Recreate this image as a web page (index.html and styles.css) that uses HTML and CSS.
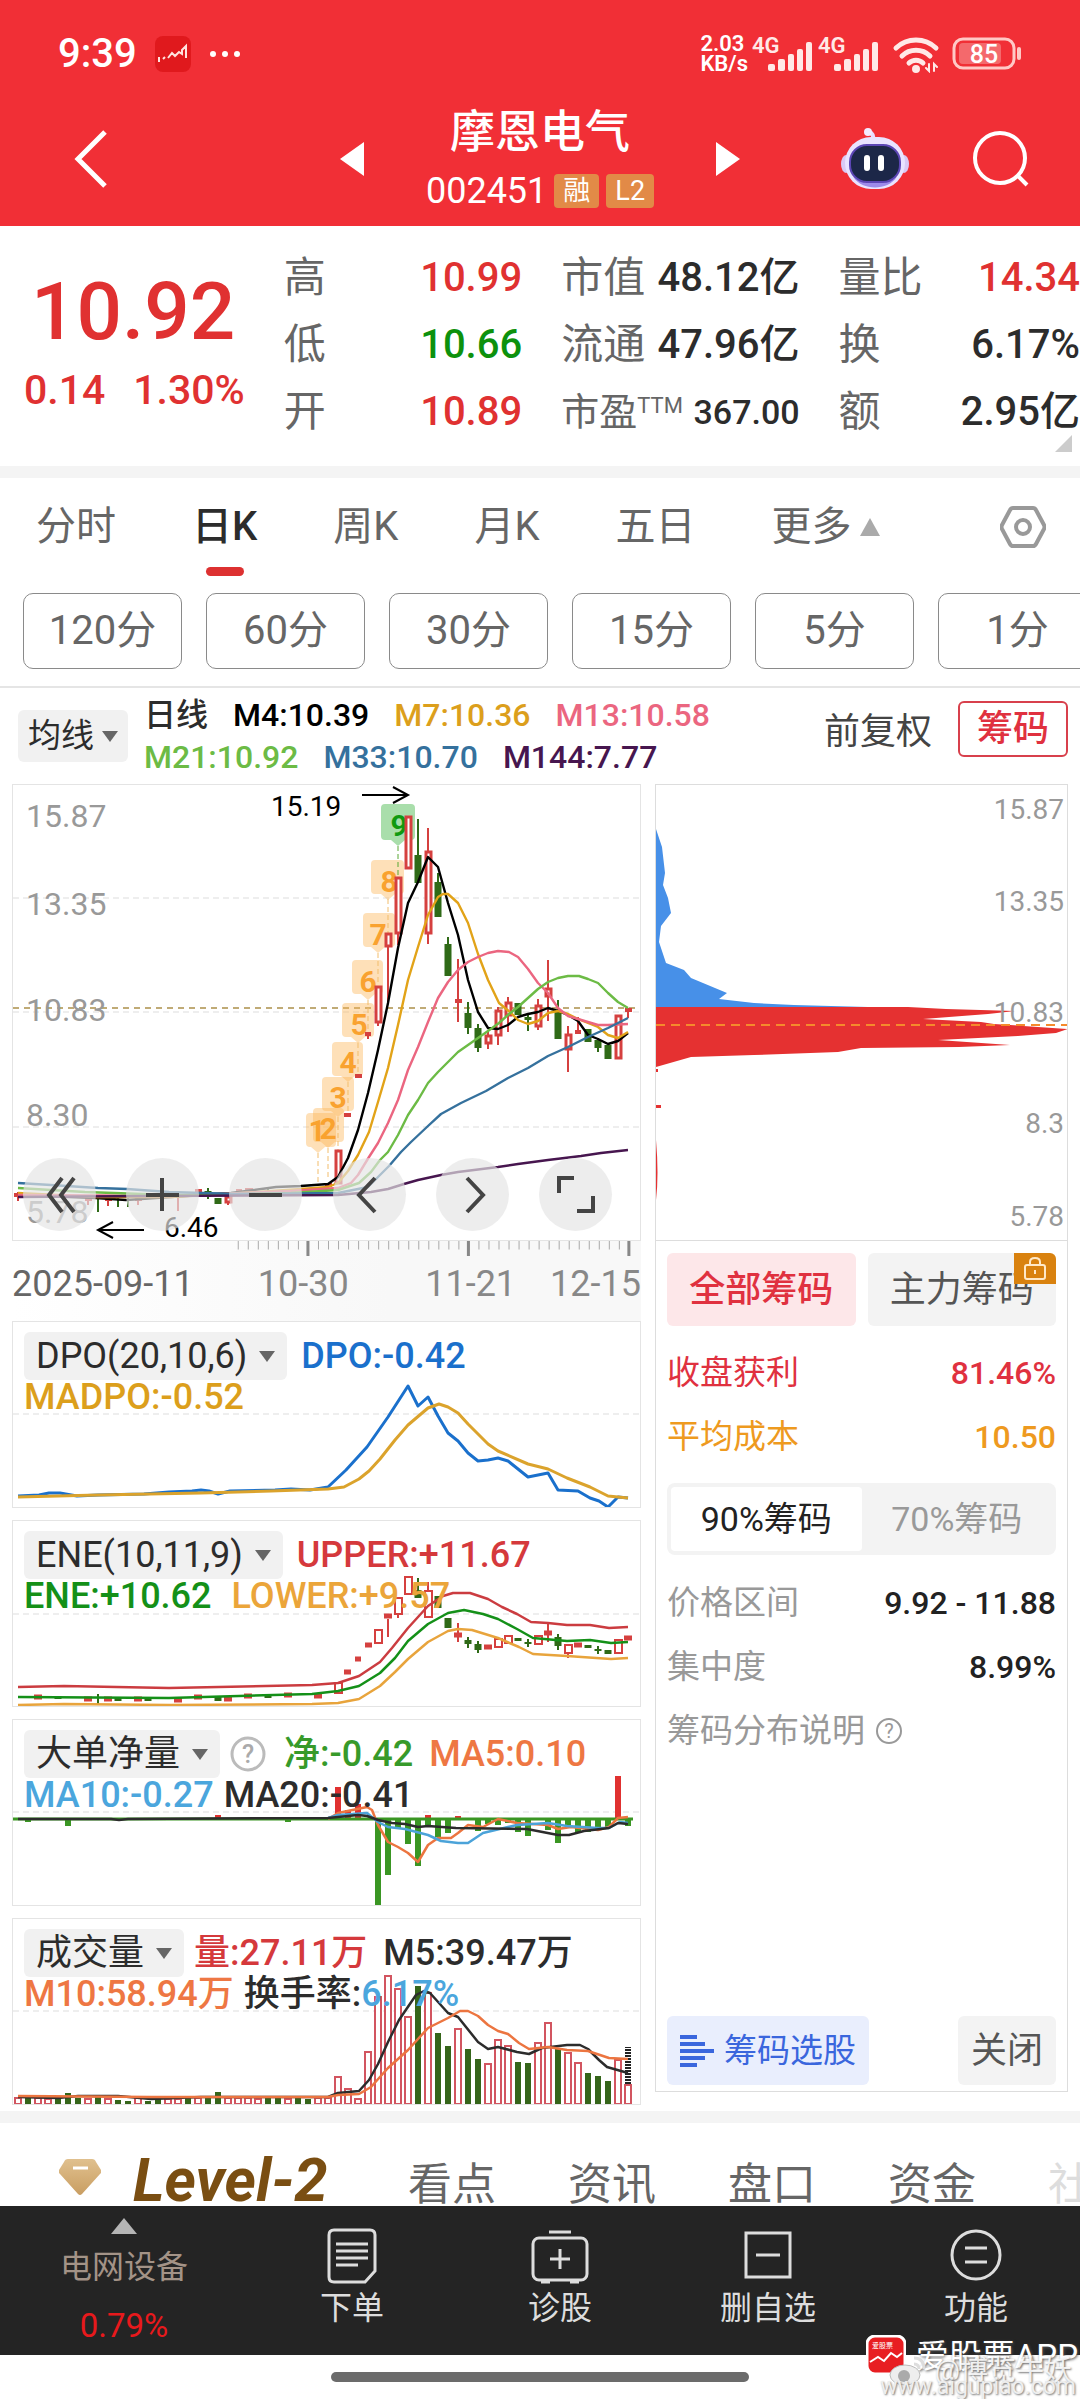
FILE: index.html
```html
<!DOCTYPE html>
<html lang="zh-CN">
<head>
<meta charset="utf-8">
<meta name="viewport" content="width=device-width">
<title>摩恩电气 002451</title>
<link rel="stylesheet" href="styles.css">
</head>
<body>
<header class="top">
  <div class="status">
    <span class="clock">9:39</span>
    <svg class="app-dot" width="36" height="36" viewBox="0 0 36 36"><rect width="36" height="36" rx="8" fill="#e0191d"/><path d="M4 26V21M8 23l2-2M13 22l4-5 3 3 4-4 3 2V14l4-4v12" fill="none" stroke="#ffe3df" stroke-width="2"/></svg>
    <svg width="34" height="8" viewBox="0 0 34 8" fill="#fff"><circle cx="4" cy="4" r="3"/><circle cx="16" cy="4" r="3"/><circle cx="28" cy="4" r="3"/></svg>
    <div class="status-right">
      <span class="speed">2.03<br>KB/s</span>
      <svg width="62" height="38" viewBox="0 0 62 38"><text x="0" y="18" class="g4">4G</text><g fill="#ffe9e7"><rect x="16" y="29" width="7" height="7" rx="2"/><rect x="26" y="24" width="7" height="12" rx="2"/><rect x="36" y="19" width="6" height="17" rx="2"/><rect x="45" y="14" width="6" height="22" rx="2"/><rect x="54" y="7" width="6" height="29" rx="2"/></g></svg>
      <svg width="62" height="38" viewBox="0 0 62 38"><text x="0" y="18" class="g4">4G</text><g fill="#ffe9e7"><rect x="16" y="29" width="7" height="7" rx="2"/><rect x="26" y="24" width="7" height="12" rx="2"/><rect x="36" y="19" width="6" height="17" rx="2"/><rect x="45" y="14" width="6" height="22" rx="2"/><rect x="54" y="7" width="6" height="29" rx="2"/></g></svg>
      <svg class="wifi" width="48" height="38" viewBox="0 0 48 38" fill="none" stroke="#ffe9e7" stroke-width="5" stroke-linecap="round"><path d="M4 13a29 29 0 0 1 40 0M10 21a20 20 0 0 1 28 0M17 28a10 10 0 0 1 14 0"/><circle cx="24" cy="34" r="2" stroke-width="4"/><path d="M37 29v7l-3-3M42 36v-7l3 3" stroke-width="2"/></svg>
      <svg width="70" height="34" viewBox="0 0 70 34"><rect x="2" y="2" width="60" height="29" rx="9" fill="none" stroke="#ffc9c6" stroke-width="3"/><rect x="7" y="6" width="42" height="21" rx="4" fill="#f4696c"/><path d="M67 12v9" stroke="#ffc9c6" stroke-width="4" stroke-linecap="round"/><text x="32" y="26" text-anchor="middle" class="batt">85</text></svg>
    </div>
  </div>
  <div class="titlebar">
    <button class="plain back" aria-label="返回"><svg width="34" height="60" viewBox="0 0 34 60"><path d="M31 3 4 30l27 27" fill="none" stroke="#fff" stroke-width="5"/></svg></button>
    <div class="name">
      <button class="plain" aria-label="上一只"><svg width="24" height="34" viewBox="0 0 24 34"><path d="M24 0v34L0 17z" fill="#fff"/></svg></button>
      <div class="name-text">
        <h1>摩恩电气</h1>
        <div class="code">002451 <span class="badge">融</span><span class="badge">L2</span></div>
      </div>
      <button class="plain" aria-label="下一只"><svg width="24" height="34" viewBox="0 0 24 34"><path d="M0 0v34l24-17z" fill="#fff"/></svg></button>
    </div>
    <div class="tools">
      <button class="plain" aria-label="智能助手"><svg width="68" height="64" viewBox="0 0 68 64"><path d="M32 14c1-5-1-8-4-9" fill="none" stroke="#e9dcff" stroke-width="4"/><circle cx="27" cy="5" r="4" fill="#f4eaff"/><ellipse cx="5" cy="37" rx="5" ry="9" fill="#d9c9f5"/><ellipse cx="63" cy="37" rx="5" ry="9" fill="#d9c9f5"/><rect x="4" y="10" width="60" height="52" rx="26" fill="#e9e3ff"/><path d="M12 50c10 14 34 14 44 0-8 8-36 8-44 0z" fill="#9d8bea"/><rect x="9" y="18" width="50" height="37" rx="17" fill="#1c2748" stroke="#5c46b5" stroke-width="2"/><path d="M26 31v10M40 31v10" stroke="#fff" stroke-width="6" stroke-linecap="round"/></svg></button>
      <button class="plain" aria-label="搜索"><svg width="58" height="58" viewBox="0 0 58 58" fill="none" stroke="#fff" stroke-width="4"><circle cx="28" cy="28" r="25"/><path d="m45 45 10 10"/></svg></button>
    </div>
  </div>
</header>

<section class="quote">
  <div class="price"><strong>10.92</strong><div class="delta"><span>0.14</span><span>1.30%</span></div></div>
  <dl>
    <div><dt>高</dt><dd class="red">10.99</dd></div>
    <div><dt>低</dt><dd class="green">10.66</dd></div>
    <div><dt>开</dt><dd class="red">10.89</dd></div>
  </dl>
  <dl>
    <div><dt>市值</dt><dd>48.12亿</dd></div>
    <div><dt>流通</dt><dd>47.96亿</dd></div>
    <div class="pe"><dt>市盈<sup>TTM</sup></dt><dd>367.00</dd></div>
  </dl>
  <dl>
    <div><dt>量比</dt><dd class="red">14.34</dd></div>
    <div><dt>换</dt><dd>6.17%</dd></div>
    <div><dt>额</dt><dd>2.95亿</dd></div>
  </dl>
  <svg class="corner" width="17" height="17" viewBox="0 0 17 17"><path d="M17 0v17H0z" fill="#ccc"/></svg>
</section>

<nav class="periods">
  <button class="plain">分时</button>
  <button class="plain on">日K</button>
  <button class="plain">周K</button>
  <button class="plain">月K</button>
  <button class="plain">五日</button>
  <button class="plain more">更多<svg width="20" height="18" viewBox="0 0 20 18"><path d="M10 0l10 18H0z" fill="#aaa"/></svg></button>
  <button class="plain gear" aria-label="设置"><svg width="46" height="42" viewBox="0 0 46 42" fill="none" stroke="#999" stroke-width="4"><path d="M13 2h20q2 0 3 2l8 15q1 2 0 4l-8 15q-1 2-3 2H13q-2 0-3-2L2 23q-1-2 0-4L10 4q1-2 3-2z"/><circle cx="23" cy="21" r="7"/></svg></button>
</nav>
<div class="minutes">
  <button>120分</button><button>60分</button><button>30分</button><button>15分</button><button>5分</button><button>1分</button>
</div>

<section class="ma">
  <button class="pick">均线<i class="caret"></i></button>
  <div class="ma-values">
    <div><span class="c-ink">日线</span><span>M4:10.39</span><span class="c-gold">M7:10.36</span><span class="c-pink">M13:10.58</span></div>
    <div><span class="c-lime">M21:10.92</span><span class="c-steel">M33:10.70</span><span class="c-plum">M144:7.77</span></div>
  </div>
  <button class="plain adjust">前复权</button>
  <button class="chip-btn">筹码</button>
</section>

<main class="board">
  <div class="charts">
    <div class="panel main">
      <svg viewBox="12 0 627 455">
        <g fill="none" stroke="#ddd" stroke-dasharray="6 4"><path d="M12 113H639M12 227H639M12 342H639"/></g>
        <path d="M12 223H639" stroke="#c0ab76" stroke-width="2" stroke-dasharray="6 5"/>
        <g class="axis"><text x="25" y="42">15.87</text><text x="25" y="130">13.35</text><text x="25" y="236">10.83</text><text x="25" y="341">8.30</text><text x="25" y="438">5.78</text></g>
        <g class="mark"><text x="270" y="31">15.19</text><text x="163" y="452">6.46</text></g>
        <path d="M361 10h45M392 2l15 8-15 8M143 445H98M112 437l-15 8 15 8" fill="none" stroke="#000" stroke-width="2"/>
        <g fill="#fcb556" fill-opacity=".42">
          <path d="M309 328h22q4 0 4 4v26q0 4-4 4h-7l-7 6-7-6h-1q-4 0-4-4v-26q0-4 4-4z"/>
          <path d="M316 323h23q4 0 4 4v26q0 4-4 4h-5l-7 6-7-6h-4q-4 0-4-4v-26q0-4 4-4z"/>
          <path d="M325 292h24q4 0 4 4v26q0 4-4 4h-5l-7 6-7-6h-5q-4 0-4-4v-26q0-4 4-4z"/>
          <path d="M335 257h23q4 0 4 4v26q0 4-4 4h-4l-7 6-7-6h-5q-4 0-4-4v-26q0-4 4-4z"/>
          <path d="M345 218h24q4 0 4 4v26q0 4-4 4h-5l-7 6-7-6h-5q-4 0-4-4v-26q0-4 4-4z"/>
          <path d="M355 175h23q4 0 4 4v26q0 4-4 4h-4l-7 6-7-6h-5q-4 0-4-4v-26q0-4 4-4z"/>
          <path d="M366 128h24q4 0 4 4v26q0 4-4 4h-6l-7 6-7-6h-4q-4 0-4-4v-26q0-4 4-4z"/>
          <path d="M374 75h25q4 0 4 4v26q0 4-4 4h-5l-7 6-7-6h-6q-4 0-4-4V79q0-4 4-4z"/>
        </g>
        <path d="M384 19h26q4 0 4 4v28q0 4-4 4h-6l-7 6-7-6h-6q-4 0-4-4V23q0-4 4-4z" fill="#4cb950" fill-opacity=".48"/>
        <path d="M317 368v30M327 363v32M337 332v33M347 297v31M357 258v30M367 215v32M377 168v32M387 114v34" stroke="#f2bd6d" stroke-dasharray="5 3"/>
        <path d="M397 61v31" stroke="#59a833" stroke-dasharray="5 3"/>
        <g class="nine"><text x="316" y="356">1</text><text x="327" y="354">2</text><text x="337" y="323">3</text><text x="347" y="288">4</text><text x="358" y="250">5</text><text x="367" y="207">6</text><text x="377" y="160">7</text><text x="388" y="107">8</text><text x="398" y="51" class="nine-last">9</text></g>
        <g stroke="#d5403f" fill="#fff">
          <path stroke-width="2" fill="none" d="M17 407v9M87 413v7M97 411v6M107 412v9M137 412v8M177 412v14M197 404v7M227 410v10M387 161v57M397 148v12M377 238v3M427 43v23M427 148v11M457 174v63M487 246v18M497 222v38M507 212v35M537 214v31M547 175v61M567 241v46M577 232v17M627 224v9M367 247v7"/>
          <path stroke-width="3" d="M335 366h5v32h-5zM375 202h5v35h-5zM385 149h5v12h-5zM395 93h5v55h-5zM405 32h5v51h-5zM425 67h5v81h-5zM485 251h5v7h-5zM495 226h5v24h-5zM505 218h5v12h-5zM535 221h5v20h-5zM545 204h5v7h-5zM565 250h5v14h-5zM615 231h5v42h-5zM225 412h5v5h-5z"/>
          <path stroke-width="4" d="M343 330h7M354 291h7M364 249h6M454 216h7M574 247h6M624 225h7M13 410h7M84 414h7M104 414h7M134 414h7M194 406h7M235 406h6M244 405h8M324 400h7"/>
        </g>
        <g stroke="#2f6a17">
          <path stroke-width="2" d="M97 412v15M117 412v10M127 412v10M207 403v11M417 34v36M437 88v10M447 152v8M467 217v32M477 239v28M527 228v18M557 215v12M597 253v14M267 402v6"/>
          <path stroke-width="7" d="M417 70v28M437 97v35M447 159v32M467 228v15M477 243v20M517 218v12M527 232v3M557 226v28M587 244v13M597 255v8M607 260v14M217 413v6M207 406v4"/>
        </g>
        <g fill="none" stroke-width="2.4" stroke-linejoin="round">
          <path stroke="#000" d="M17 410 95 413 125 415 170 412 230 408 275 402 300 401 327 399 337 392 347 373 357 345 367 308 377 265 387 218 397 163 407 118 417 97 427 72 437 82 447 118 457 150 467 195 477 227 487 243 497 244 507 240 517 232 527 229 537 227 547 223 557 226 567 230 577 236 587 250 597 254 607 259 617 256 627 248"/>
          <path stroke="#e2a318" d="M17 408 95 412 170 412 240 408 300 404 327 402 337 398 347 386 357 370 368 347 377 317 387 283 397 240 407 195 417 162 427 130 437 112 442 109 447 109 457 118 467 138 477 169 487 195 498 218 510 228 517 235 527 239 537 236 547 228 557 226 567 229 577 234 587 238 597 242 607 250 617 253 627 247"/>
          <path stroke="#eb6680" d="M17 410 170 411 290 406 337 403 350 398 357 390 368 372 377 358 387 338 397 315 407 285 417 262 427 237 437 213 447 197 457 185 467 177 477 172 487 168 497 166 508 167 517 172 527 184 537 198 547 208 557 223 567 231 577 234 587 237 597 240 607 240 627 239"/>
          <path stroke="#6cbb45" d="M17 403 50 405 84 407 170 410 290 408 337 405 358 398 370 387 379 375 387 367 397 350 407 330 417 315 427 298 437 287 447 277 457 267 467 260 477 253 487 246 498 238 508 229 517 222 527 213 537 204 547 197 557 193 567 191 578 191 587 194 597 198 607 208 617 217 627 223"/>
          <path stroke="#35719d" d="M17 398 50 400 97 403 126 404 168 407 236 409 337 408 367 402 388 381 400 367 410 357 427 341 440 329 460 318 485 306 507 293 527 283 547 271 567 262 587 252 607 243 627 233"/>
          <path stroke="#47164f" d="M17 412 150 411 337 410 370 407 387 404 403 399 417 395 440 390 457 387 497 382 517 379 547 375 580 371 600 368 627 365"/>
        </g>
      </svg>
      <div class="pad">
        <button aria-label="最左"><svg viewBox="0 0 73 73"><path d="M39 20 26 37l13 17M51 20 38 37l13 17"/></svg></button>
        <button aria-label="放大"><svg viewBox="0 0 73 73"><path d="M36 20v33M20 37h33"/></svg></button>
        <button aria-label="缩小"><svg viewBox="0 0 73 73"><path d="M20 37h33"/></svg></button>
        <button aria-label="左移"><svg viewBox="0 0 73 73"><path d="M42 20 26 37l16 17"/></svg></button>
        <button aria-label="右移"><svg viewBox="0 0 73 73"><path d="m31 20 16 17-16 17"/></svg></button>
        <button aria-label="全屏"><svg viewBox="0 0 73 73"><path d="M20 35V20h15M54 38v15H38"/></svg></button>
      </div>
    </div>
    <div class="dates">
      <svg viewBox="12 0 627 16"><path d="M232 4h400" stroke="#aaa" stroke-width="9" stroke-dasharray="1 9" stroke-dashoffset="5"/><path d="M307 0v15M467 0v15M627 0v15" stroke="#888" stroke-width="3"/></svg>
      <div class="date-row"><span>2025-09-11</span><span>10-30</span><span>11-21</span><span>12-15</span></div>
    </div>

    <div class="panel">
      <svg viewBox="12 0 627 185">
        <path d="M12 92H639" stroke="#ddd" stroke-dasharray="6 4"/>
        <g fill="none" stroke-width="3" stroke-linejoin="round">
          <path stroke="#1a70cc" d="M17 174 38 173 48 171 59 171 76 174 97 173 143 172 168 170 191 169 200 168 208 169 217 172 229 169 274 168 290 167 309 168 327 165 345 148 366 125 387 95 407 64 417 84 427 75 437 94 447 111 457 119 467 131 477 139 487 138 497 136 507 139 527 155 547 151 557 168 577 169 589 176 598 179 607 185 617 175 627 176"/>
          <path stroke="#dba32c" d="M17 175 97 173 200 171 270 169 327 167 343 165 358 157 368 149 379 137 394 118 407 103 427 86 438 82 447 85 457 91 467 102 487 122 497 129 527 142 547 147 566 156 589 165 607 174 627 176"/>
        </g>
      </svg>
      <div class="legend">
        <div><button class="pick">DPO(20,10,6)<i class="caret"></i></button><span class="c-blue">DPO:-0.42</span></div>
        <div><span class="c-gold">MADPO:-0.52</span></div>
      </div>
    </div>

    <div class="panel">
      <svg viewBox="12 0 627 185">
        <path d="M12 93H639" stroke="#ddd" stroke-dasharray="6 4"/>
        <g stroke="#d5403f" fill="#fff">
          <path stroke-width="2" fill="none" d="M387 98v18M427 61v9M397 93v4M457 102v19M547 103v18M567 132v5"/>
          <path stroke-width="2" d="M334 162h7v10h-7zM374 109h7v13h-7zM394 77h7v16h-7zM404 56h7v17h-7zM424 70h7v26h-7zM494 118h7v8h-7zM504 115h7v7h-7zM534 115h7v8h-7zM564 124h7v8h-7zM614 119h7v13h-7z"/>
          <path stroke-width="5" d="M343 151h7M354 138h6M364 124h7M383 95h8M453 114h8M483 126h8M543 112h8M573 124h8M623 117h8M33 176h8M83 178h8M103 178h8M133 178h8M173 179h8M193 176h8M223 178h8M243 175h8M283 174h8M313 175h8"/>
        </g>
        <g stroke="#2f6a17">
          <path stroke-width="2" d="M417 57v13M467 116v11M477 120v12M527 118v8M557 113v16M597 125v8M97 173v10"/>
          <path stroke-width="7" d="M417 69v8M437 75v12M447 97v10M467 119v4M477 123v6M517 117v3M527 121v2M557 116v9M587 124v3M597 128v2M607 129v4M57 175v3M117 177v3M147 177v3M217 176v4M267 174v3"/>
        </g>
        <g fill="none" stroke-width="2.5" stroke-linejoin="round">
          <path stroke="#cb3c40" d="M17 166 63 165 168 167 311 164 337 162 358 155 379 141 391 127 407 107 427 85 442 75 452 72 469 72 487 78 501 86 516 93 530 101 547 102 566 104 589 104 608 107 627 106"/>
          <path stroke="#149018" d="M17 176 168 177 311 173 337 170 358 165 379 152 394 137 407 120 427 103 447 92 463 89 482 93 497 98 516 108 532 117 566 120 589 119 610 122 627 121"/>
          <path stroke="#e8a43c" d="M17 184 63 183 168 184 311 183 337 182 358 178 379 165 394 151 407 138 427 121 447 110 457 108 471 109 497 117 518 126 532 133 566 135 610 138 627 137"/>
        </g>
      </svg>
      <div class="legend">
        <div><button class="pick">ENE(10,11,9)<i class="caret"></i></button><span class="c-red">UPPER:+11.67</span></div>
        <div><span class="c-green">ENE:+10.62</span><span class="c-amber">LOWER:+9.57</span></div>
      </div>
    </div>

    <div class="panel">
      <svg viewBox="12 0 627 185">
        <path d="M12 92H639" stroke="#ddd" stroke-dasharray="6 4"/>
        <path stroke="#3a9623" stroke-width="6" d="M67 99v7M377 99v86M387 99v56M397 99v9M407 99v25M417 99v47M427 99v8M437 99v18M447 99v14M477 99v12M487 99v5M497 99v6M507 99v4M517 99v13M527 99v17M547 99v11M557 99v24M567 99v8M577 99v13M587 99v13M597 99v11M607 99v8M627 99v7M27 99v3M287 99v3"/>
        <path stroke="#e03130" stroke-width="6" d="M617 98V56M337 98V67M347 98v-8M357 98V84M217 99v-4M427 99v-4M457 99v-3"/>
        <path d="M12 99H632" stroke="#3a9623" stroke-width="3"/>
        <g fill="none" stroke-width="2.5" stroke-linejoin="round">
          <path stroke="#ec7540" d="M327 99 337 93 366 87 371 90 377 105 387 122 397 127 407 133 417 142 427 125 437 118 450 118 457 113 467 105 482 107 497 99 516 103 547 105 557 109 570 107 597 110 608 107 617 98 627 97"/>
          <path stroke="#4ba3d9" d="M327 98 337 95 366 93 377 102 387 107 404 109 427 115 440 121 457 123 467 123 482 113 507 107 516 105 547 103 566 106 597 108 608 108 619 102 627 103"/>
          <path stroke="#2c2c2c" d="M17 99H110L118 100 127 99 327 98 357 95 366 96 377 100 391 103 404 104 417 107 427 106 455 108 526 109 557 115 568 115 583 111 608 108 617 103 627 104"/>
        </g>
      </svg>
      <div class="legend tight">
        <div><button class="pick">大单净量<i class="caret"></i></button><svg width="36" height="36" viewBox="0 0 36 36"><circle cx="18" cy="18" r="16" fill="none" stroke="#bbb" stroke-width="3"/><text x="18" y="27" text-anchor="middle" class="q">?</text></svg><span class="c-leaf">净:-0.42</span><span class="c-coral">MA5:0.10</span></div>
        <div><span class="c-sky">MA10:-0.27</span><span class="c-ink">MA20:-0.41</span></div>
      </div>
    </div>

    <div class="panel">
      <svg viewBox="12 0 627 185">
        <path d="M12 92H639" stroke="#ddd" stroke-dasharray="6 4"/>
        <path fill="#fff" stroke="#d25560" stroke-width="2" d="M14 179h6v6h-6zM34 179h6v6h-6zM44 180h6v5h-6zM84 180h6v5h-6zM104 180h6v5h-6zM134 179h6v6h-6zM164 180h6v5h-6zM174 180h6v5h-6zM194 179h6v6h-6zM224 179h6v6h-6zM234 179h6v6h-6zM244 179h6v6h-6zM254 180h6v5h-6zM284 180h6v5h-6zM314 179h6v6h-6zM324 179h6v6h-6zM334 158h6v27h-6zM344 170h6v15h-6zM354 180h6v5h-6zM364 133h6v52h-6zM374 78h6v107h-6zM384 57h6v128h-6zM394 70h6v115h-6zM404 98h6v87h-6zM424 74h6v111h-6zM454 110h6v75h-6zM484 145h6v40h-6zM494 121h6v64h-6zM504 127h6v58h-6zM534 124h6v61h-6zM544 104h6v81h-6zM564 134h6v51h-6zM574 144h6v41h-6zM614 141h6v44h-6zM624 166h6v19h-6z"/>
        <path stroke="#35651a" stroke-width="6" d="M27 185v-6M57 185v-7M67 185v-11M77 185v-6M97 185v-7M117 185v-4M127 185v-3M147 185v-3M157 185v-6M187 185v-6M207 185v-7M217 185v-12M267 185v-6M277 185v-6M297 185v-6M307 185v-5M417 185V67M437 185V114M447 185V127M467 185V130M477 185V140M517 185V143M527 185V144M557 185V130M587 185V154M597 185V157M607 185V162"/>
        <path d="M627 165V128" stroke="#222" stroke-width="6" stroke-dasharray="2 1"/>
        <g fill="none" stroke-width="2.5" stroke-linejoin="round">
          <path stroke="#2c2c2c" d="M17 178 57 179 77 177 117 177 150 180 200 178 327 178 337 174 358 172 368 161 377 145 387 123 398 101 415 76 423 72 429 74 447 94 457 98 477 123 487 130 497 128 516 133 528 135 541 129 566 126 579 126 587 130 598 141 606 148 627 154"/>
          <path stroke="#ec7540" d="M17 177 150 178 327 178 337 176 358 175 370 168 387 149 407 131 427 109 447 99 459 92 467 92 477 97 487 106 497 112 507 115 518 124 528 130 547 128 566 131 587 132 608 139 627 140"/>
        </g>
      </svg>
      <div class="legend tight">
        <div><button class="pick">成交量<i class="caret"></i></button><span class="c-red">量:27.11万</span><span class="c-ink">M5:39.47万</span></div>
        <div><span class="c-coral">M10:58.94万</span><span class="c-ink">换手率:<span class="c-sky">6.17%</span></span></div>
      </div>
    </div>
  </div>

  <aside class="chips">
    <svg viewBox="0 0 411 455">
      <path fill="#4790e8" d="M0 44 6 62 9 88 7 100 12 113 15 128 5 141 3 157 10 178 28 185 35 193 71 208 63 214 98 218 138 220 212 222H0z"/>
      <path fill="#e53131" d="M0 222H252L290 224 359 226 332 229 267 234 325 237 338 239 412 244 400 248 362 251 282 255 354 260 303 262 205 263 182 267 98 270 35 272 0 282zM0 284h2v3H0zM0 320h5v3H0zM0 355q3 35 0 60z"/>
      <path d="M0 240H411" stroke="#f58a2c" stroke-width="2" stroke-dasharray="9 6"/>
      <g class="axis small" text-anchor="end"><text x="408" y="34">15.87</text><text x="408" y="126">13.35</text><text x="408" y="237">10.83</text><text x="408" y="348">8.3</text><text x="408" y="441">5.78</text></g>
    </svg>
    <div class="chip-body">
      <div class="pair">
        <button class="seg hot">全部筹码</button>
        <button class="seg">主力筹码<span class="lock"><svg width="26" height="26" viewBox="0 0 26 26" fill="none" stroke="#ffe9c8" stroke-width="2"><rect x="3" y="9" width="20" height="14" rx="2"/><path d="M8 9V6q0-4 5-4t5 4v3M13 14v4"/></svg></span></button>
      </div>
      <div class="row hot"><span>收盘获利</span><b>81.46%</b></div>
      <div class="row avg"><span>平均成本</span><b>10.50</b></div>
      <div class="toggle"><button class="on">90%筹码</button><button>70%筹码</button></div>
      <div class="row"><span>价格区间</span><b>9.92 - 11.88</b></div>
      <div class="row"><span>集中度</span><b>8.99%</b></div>
      <div class="row note"><a href="#about">筹码分布说明</a><svg width="28" height="28" viewBox="0 0 28 28"><circle cx="14" cy="14" r="12" fill="none" stroke="#999" stroke-width="2"/><text x="14" y="21" text-anchor="middle" class="q sm">?</text></svg></div>
      <div class="foot">
        <button class="select"><svg width="34" height="34" viewBox="0 0 34 34" stroke="#3a66dd" stroke-width="4"><path d="M0 3h17M0 10h25M0 17h34M0 24h25M0 31h17"/></svg>筹码选股</button>
        <button class="close">关闭</button>
      </div>
    </div>
  </aside>
</main>

<nav class="sections">
  <a href="#level2" class="level"><svg width="42" height="36" viewBox="0 0 42 36"><defs><linearGradient id="gem" x2="0" y2="1"><stop stop-color="#e0c08e"/><stop offset="1" stop-color="#c99e62"/></linearGradient></defs><path d="M9 0h24q3 0 4 3l5 8q1 2-1 4L23 35q-2 2-4 0L1 15q-2-2-1-4l5-8q1-3 4-3z" fill="url(#gem)"/><path d="M14 9h15" stroke="#fff" stroke-width="3"/></svg><em>Level-2</em></a>
  <a href="#view">看点</a><a href="#news">资讯</a><a href="#tape">盘口</a><a href="#funds">资金</a><a href="#club" class="fade">社区</a>
</nav>

<nav class="dock">
  <a href="#sector" class="sector"><svg width="26" height="16" viewBox="0 0 26 16"><path d="M13 0l13 16H0z" fill="#b5b5b5"/></svg><span>电网设备</span><span class="pct">0.79%</span></a>
  <a href="#order"><svg width="50" height="56" viewBox="0 0 50 56"><path d="M7 2h36q5 0 5 5v36L38 54H7q-5 0-5-5V7q0-5 5-5z"/><path d="M9 16h32M9 23h32M9 30h32M9 37h22"/></svg><span>下单</span></a>
  <a href="#check"><svg width="58" height="56" viewBox="0 0 58 56"><path d="M18 4h22"/><rect x="2" y="10" width="54" height="42" rx="6"/><path d="M29 21v20M19 31h20M10 54h9M39 54h9"/></svg><span>诊股</span></a>
  <a href="#remove"><svg width="50" height="56" viewBox="0 0 50 56"><rect x="3" y="5" width="44" height="44"/><path d="M13 27h24"/></svg><span>删自选</span></a>
  <a href="#tools"><svg width="54" height="56" viewBox="0 0 54 56"><circle cx="27" cy="27" r="24"/><path d="M16 20h22M16 34h22"/></svg><span>功能</span></a>
</nav>
<footer class="home">
  <i></i>
  <div class="stamp">
    <svg width="40" height="40" viewBox="0 0 40 40"><rect x="1" y="1" width="38" height="38" rx="8" fill="#e81e22" stroke="#fff" stroke-width="3"/><path d="m4 27 8-5 6 4 7-8 6 4 5-4" fill="none" stroke="#fff" stroke-width="2"/><text x="6" y="13" class="tiny">爱股票</text></svg>
    <span class="brand">爱股票APP</span>
    <span class="weibo"><svg width="38" height="32" viewBox="0 0 38 32"><ellipse cx="16" cy="20" rx="15" ry="10" fill="#eee" stroke="#bbb" stroke-width="1"/><circle cx="15" cy="21" r="6" fill="#aaa"/><path d="M25 3q10 0 10 11M25 9q5 0 5 5" fill="none" stroke="#ddd" stroke-width="3"/></svg>@博览牛妖</span>
    <span class="site">www.aigupiao.com</span>
  </div>
</footer>
</body>
</html>
```
FILE: styles.css
```css
* { box-sizing: border-box; }
body { margin: 0; background: #fff; color: #2c2c2c; font-family: Roboto, "Noto Sans CJK SC", sans-serif; font-size: 36px; line-height: 40px; overflow-x: hidden; }
svg { display: block; flex: none; }
button { font: inherit; color: inherit; border: 0; padding: 0; background: none; display: flex; align-items: center; justify-content: center; white-space: nowrap; }
a { color: inherit; text-decoration: none; }
h1, dl, dt, dd { margin: 0; font-weight: 400; }

.top { background: #f12f36; color: #fff; height: 226px; }
.status { height: 106px; padding: 2px 58px 0; display: flex; align-items: center; gap: 18px; }
.clock { font-size: 40px; font-weight: 500; }
.status-right { margin-left: auto; display: flex; align-items: center; gap: 4px; }
.speed { font-size: 22px; line-height: 20px; font-weight: 600; }
.g4 { font-size: 22px; font-weight: 600; fill: #ffe9e7; }
.batt { font-size: 25px; font-weight: 500; fill: #fff; }
.wifi { margin: 0 8px; }
.titlebar { display: grid; grid-template-columns: 1fr auto 1fr; padding: 0 50px; align-items: center; height: 116px; }
.titlebar button { margin-bottom: 10px; }
.back { justify-self: start; margin-left: 24px; }
.name { display: flex; align-items: center; gap: 62px; }
.name-text { text-align: center; }
h1 { font-size: 45px; line-height: 54px; font-weight: 500; }
.code { display: flex; align-items: center; justify-content: center; gap: 7px; line-height: 62px; }
.badge { background: #e28a47; border-radius: 4px; font-size: 27px; line-height: 34px; padding: 0 9px; }
.tools { display: flex; justify-content: flex-end; align-items: center; gap: 63px; }

.quote { display: grid; grid-template-columns: 244fr 239fr 239fr 242fr; column-gap: 39px; height: 240px; padding-top: 18px; position: relative; }
.price { color: #e03131; padding: 26px 0 0 24px; white-space: nowrap; }
.price strong { display: block; font-size: 80px; line-height: 84px; font-weight: 500; padding-left: 7px; }
.delta { display: flex; gap: 28px; font-size: 41px; line-height: 72px; font-weight: 500; }
.quote dl > div { display: flex; justify-content: space-between; align-items: center; height: 67px; }
.quote dt { font-size: 42px; color: #666; white-space: nowrap; }
.quote dd { font-size: 40px; white-space: nowrap; font-weight: 500; }
.quote .pe dt { font-size: 38px; }
.quote .pe dd { font-size: 34px; }
.quote sup { font-size: 22px; line-height: 22px; vertical-align: 12px; }
.red { color: #e03131; }
.green { color: #0d910d; }
.corner { position: absolute; right: 8px; bottom: 14px; }

.periods { border-top: 12px solid #f4f4f4; height: 115px; padding: 0 34px 0 36px; display: flex; gap: 76px; font-size: 40px; color: #666; }
.periods button { height: 98px; }
.periods .on { color: #2c2c2c; font-weight: 500; position: relative; }
.periods .on::after { content: ""; position: absolute; left: 50%; bottom: 0; width: 38px; height: 9px; margin-left: -19px; border-radius: 5px; background: #dd3131; }
.more { gap: 8px; }
.gear { margin-left: auto; }
.minutes { display: grid; grid-auto-flow: column; grid-auto-columns: 159px; gap: 24px; padding: 12px 0 17px 23px; overflow: hidden; border-bottom: 2px solid #e5e5e5; }
.minutes button { height: 76px; border: 1px solid #8a8a8a; border-radius: 10px; font-size: 40px; color: #666; }

.ma { display: flex; align-items: center; padding: 0 12px 0 18px; height: 96px; }
.pick { background: #f1f1f1; border-radius: 6px; height: 48px; padding: 0 12px; gap: 12px; }
.ma .pick { font-size: 33px; height: 52px; padding: 0 10px; gap: 8px; }
.caret { border: 8px solid transparent; border-top: 11px solid #666; border-bottom: 0; }
.ma-values { margin-left: 16px; font-size: 32px; line-height: 42px; color: #000; font-weight: 500; }
.ma-values div, .legend div { display: flex; gap: 25px; white-space: nowrap; }
.adjust { margin-left: auto; margin-right: 26px; margin-bottom: 8px; font-size: 36px; color: #444; }
.chip-btn { width: 110px; height: 56px; margin-bottom: 14px; border: 2px solid #d8404c; border-radius: 6px; color: #e0313f; font-weight: 500; }
.c-ink { color: #2c2c2c; } .c-gold { color: #dc9f1c; } .c-pink { color: #eb6680; } .c-lime { color: #6cbb45; }
.c-steel { color: #35719d; } .c-plum { color: #47164f; } .c-blue { color: #1a70cc; } .c-red { color: #d5393c; }
.c-green { color: #149018; } .c-amber { color: #eba53a; } .c-leaf { color: #379a2a; } .c-coral { color: #ee7743; } .c-sky { color: #4ba6dd; }

.board { display: grid; grid-template-columns: 629fr 413fr; gap: 14px; padding: 0 12px 0 12px; }
.panel { border: 1px solid #e4e4e4; margin-bottom: 12px; display: grid; }
.panel > * { grid-area: 1 / 1; }
.panel > svg, .chips > svg, .dates > svg { width: 100%; height: auto; }
.main { margin-bottom: 0; position: relative; }
.panel:last-child { margin-bottom: 6px; }
.axis { font-size: 32px; fill: #999; }
.axis.small { font-size: 28px; }
.mark { font-size: 28px; fill: #000; }
.nine { font-size: 30px; font-weight: 700; fill: #f9a22f; text-anchor: middle; }
.nine-last { fill: #109a10; }
.pad { align-self: end; display: flex; justify-content: space-between; padding: 0 28px 9px 10px; }
.pad button { width: 73px; height: 73px; border-radius: 50%; background: rgba(228, 228, 228, .68); }
.pad svg { width: 73px; height: 73px; fill: none; stroke: #444; stroke-width: 4; }
.dates { height: 80px; background: linear-gradient(90deg, #fff, #f8f8f8 60%); color: #888; }
.date-row { display: flex; line-height: 54px; white-space: nowrap; }
.date-row span:first-child { color: #666; margin-right: 64px; }
.date-row span:nth-child(2) { margin-right: auto; }
.date-row span:nth-child(3) { margin-right: 34px; }
.legend { padding: 10px 0 0 11px; }
.legend div { align-items: center; gap: 20px; font-weight: 500; line-height: 34px; }
.legend div:first-child { height: 48px; gap: 14px; }
.legend div:first-child > span + span { margin-left: 6px; }
.legend.tight div { gap: 10px; }
.legend.tight svg + span { margin-left: 8px; }
.legend .pick { font-weight: 400; }
.q { font-size: 25px; fill: #aaa; }
.q.sm { font-size: 20px; fill: #999; }

.chips { border: 1px solid #ddd; margin-bottom: 19px; display: flex; flex-direction: column; }
.chip-body { border-top: 1px solid #ddd; flex: 1; padding: 12px 11px 6px; display: flex; flex-direction: column; font-size: 33px; }
.pair { display: grid; grid-template-columns: 1fr 1fr; gap: 12px; margin-bottom: 15px; }
.seg { position: relative; height: 73px; border-radius: 6px; background: #f3f3f3; color: #555; font-size: 36px; }
.seg.hot { background: #fde7e9; font-weight: 500; }
.hot, .row.hot span, .row.hot b { color: #e0313f; }
.lock { position: absolute; right: 0; top: 0; width: 42px; height: 31px; background: #d9820f; border-radius: 0 6px 0 0; display: flex; align-items: center; justify-content: center; }
.row { display: flex; justify-content: space-between; align-items: center; height: 64px; color: #999; }
.row b { font-weight: 500; font-size: 32px; color: #222; }
.row.avg span, .row.avg b { color: #ee9a1f; }
.toggle { display: grid; grid-template-columns: 1fr 1fr; margin: 14px 0 16px; padding: 4px; height: 72px; background: #f3f3f3; border-radius: 8px; font-size: 34px; }
.toggle button { color: #999; border-radius: 4px; }
.toggle .on { background: #fff; color: #222; }
.row.note { justify-content: flex-start; gap: 10px; }
.foot { margin-top: auto; display: flex; justify-content: space-between; }
.foot button { height: 69px; border-radius: 6px; }
.select { background: #e9eefd; color: #3a66dd; width: 202px; gap: 10px; }
.close { background: #f3f3f3; color: #555; width: 98px; font-size: 36px; }

.sections { border-top: 12px solid #f4f4f4; height: 95px; padding: 32px 0 0 59px; overflow: hidden; display: flex; gap: 72px; font-size: 44px; line-height: 60px; color: #666; white-space: nowrap; }
.sections a { flex: none; }
.level { display: flex; gap: 32px; color: #7a4e12; width: 277px; align-items: center; }
.level svg { margin-top: -8px; }
.level em { font-size: 60px; font-weight: 700; }
.sections .fade { color: #ddd; }
.dock { background: #242424; color: #ddd; height: 149px; display: grid; grid-template-columns: 248fr 208fr 208fr 208fr 208fr; font-size: 32px; }
.dock a { display: flex; flex-direction: column; align-items: center; padding-top: 22px; gap: 4px; }
.dock a > svg { fill: none; stroke: #ddd; stroke-width: 3; }
.dock .sector { padding-top: 12px; gap: 13px; color: #a39387; }
.dock .sector svg { stroke: none; }
.sector .pct { color: #e8191c; font-size: 33px; margin-top: 6px; }
.home { height: 44px; display: flex; justify-content: center; align-items: center; position: relative; }
.home i { width: 418px; height: 10px; border-radius: 5px; background: #6b6b6b; }
.stamp { position: absolute; right: 2px; bottom: 0; width: 212px; height: 64px; white-space: nowrap; }
.stamp > svg { position: absolute; left: 0; top: 0; }
.tiny { font-size: 7px; fill: #fff; }
.brand { position: absolute; right: 0; top: 2px; font-size: 33px; line-height: 40px; color: #fff; text-shadow: 1px 1px 3px #555; }
.weibo { position: absolute; right: 6px; top: 20px; display: flex; align-items: center; font-size: 28px; line-height: 32px; gap: 8px; color: rgba(255, 255, 255, .85); text-shadow: 1px 1px 2px #777; }
.site { position: absolute; right: 2px; bottom: 0; font-size: 23px; line-height: 24px; color: #eee; text-shadow: 1px 1px 2px #777; }
```
